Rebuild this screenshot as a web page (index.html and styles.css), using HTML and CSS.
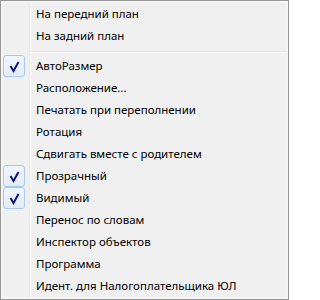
FILE: index.html
```html
<!DOCTYPE html>
<html>
<head>
<meta charset="utf-8">
<link rel="stylesheet" href="styles.css">
</head>
<body>
<div class="menu">
  <div class="list">
    <div class="item"><span class="icon"></span><span class="label">На передний план</span></div>
    <div class="item"><span class="icon"></span><span class="label">На задний план</span></div>
    <div class="sep"></div>
    <div class="item"><span class="icon check"><svg width="22" height="22" viewBox="0 0 22 22"><polyline points="7.5,11 10.5,16 15.5,7" fill="none" stroke="#0d1473" stroke-width="2"/></svg></span><span class="label">АвтоРазмер</span></div>
    <div class="item"><span class="icon"></span><span class="label">Расположение...</span></div>
    <div class="item"><span class="icon"></span><span class="label">Печатать при переполнении</span></div>
    <div class="item"><span class="icon"></span><span class="label">Ротация</span></div>
    <div class="item"><span class="icon"></span><span class="label">Сдвигать вместе с родителем</span></div>
    <div class="item"><span class="icon check"><svg width="22" height="22" viewBox="0 0 22 22"><polyline points="7.5,11 10.5,16 15.5,7" fill="none" stroke="#0d1473" stroke-width="2"/></svg></span><span class="label">Прозрачный</span></div>
    <div class="item"><span class="icon check"><svg width="22" height="22" viewBox="0 0 22 22"><polyline points="7.5,11 10.5,16 15.5,7" fill="none" stroke="#0d1473" stroke-width="2"/></svg></span><span class="label">Видимый</span></div>
    <div class="item"><span class="icon"></span><span class="label">Перенос по словам</span></div>
    <div class="item"><span class="icon"></span><span class="label">Инспектор объектов</span></div>
    <div class="item"><span class="icon"></span><span class="label">Программа</span></div>
    <div class="item"><span class="icon"></span><span class="label">Идент. для Налогоплательщика ЮЛ</span></div>
  </div>
</div>
</body>
</html>
```
FILE: styles.css
```css
html, body {
  margin: 0;
  padding: 0;
  background: #ffffff;
}
.menu {
  width: 289px;
  height: 300px;
  box-sizing: border-box;
  border: 1px solid #979797;
  padding: 2px;
  background: #f5f5f5;
  font-family: "Noto Sans", "Open Sans", sans-serif;
  font-size: 11.5px;
  color: #000000;
}
.list {
  height: 100%;
  background-color: #f0f0f0;
  background-image: linear-gradient(to right, transparent 26px, #e2e3e3 26px, #e2e3e3 27px, #ffffff 27px, #ffffff 28px, transparent 28px);
}
.item {
  display: flex;
  align-items: center;
  height: 22px;
}
.icon {
  width: 22px;
  height: 22px;
  box-sizing: border-box;
  flex: none;
}
.icon.check {
  border: 1px solid #a8c8ee;
  border-radius: 3px;
  background: linear-gradient(#f0f5fc, #e3ecf9);
}
.icon svg {
  display: block;
  margin: -1px;
}
.label {
  margin-left: 11px;
  white-space: nowrap;
  line-height: 22px;
}
.sep {
  height: 8px;
  margin-left: 28px;
  background-image: linear-gradient(to bottom, transparent 4px, #e0e0e0 4px, #e0e0e0 5px, #ffffff 5px, #ffffff 6px, transparent 6px);
}
```
